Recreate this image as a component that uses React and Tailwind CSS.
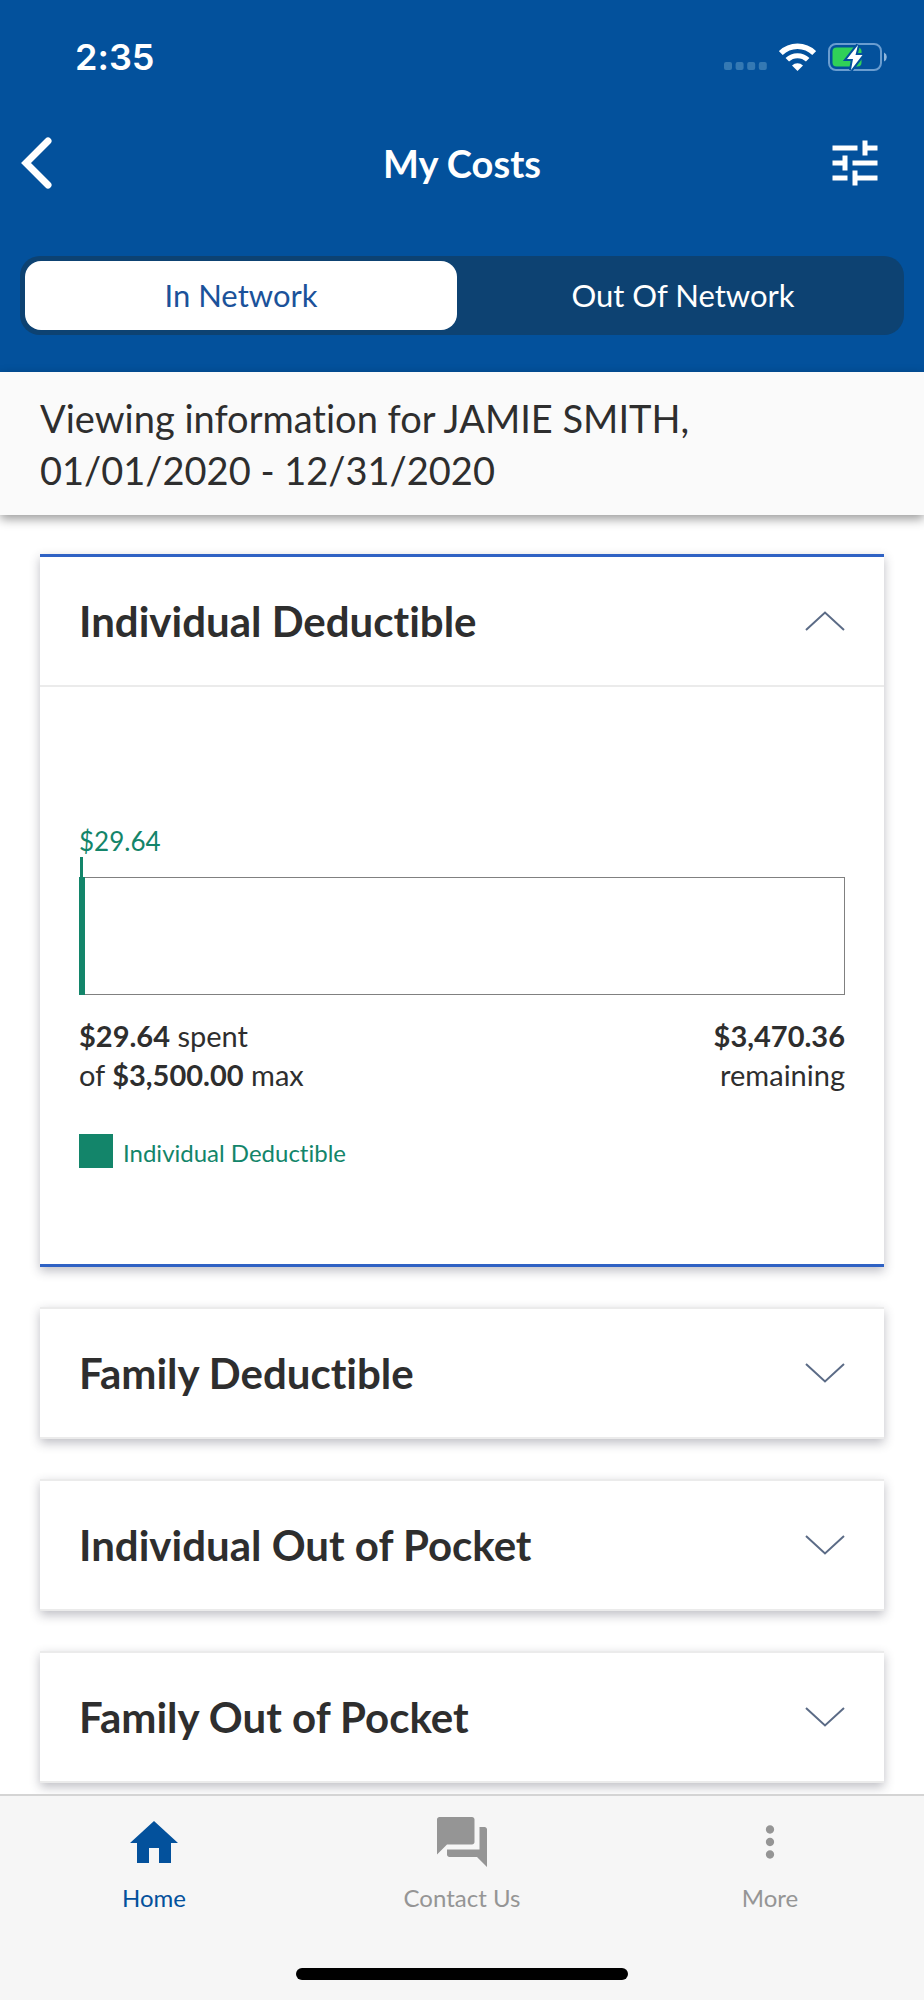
import { useState } from "react";
import { MdTune, MdForum, MdMoreVert } from "react-icons/md";

const NETWORKS = ["In Network", "Out Of Network"];

const COSTS = [
  { key: "ind-ded", title: "Individual Deductible", spent: 29.64, max: 3500 },
  { key: "fam-ded", title: "Family Deductible", spent: 29.64, max: 7000 },
  { key: "ind-oop", title: "Individual Out of Pocket", spent: 29.64, max: 6000 },
  { key: "fam-oop", title: "Family Out of Pocket", spent: 29.64, max: 12000 },
];

const TABS = [
  { key: "home", label: "Home", Icon: HomeIcon },
  { key: "contact", label: "Contact Us", Icon: ContactIcon },
  { key: "more", label: "More", Icon: MoreIcon },
];

function fmtUsd(amount) {
  return `$${amount.toLocaleString("en-US", {
    minimumFractionDigits: 2,
    maximumFractionDigits: 2,
  })}`;
}

function HomeIcon() {
  return (
    <svg viewBox="0 0 48 42" className="h-[42px] w-12" fill="currentColor">
      <path d="M24 0 48 22H41V42H29V27H19V42H7V22H0Z" />
    </svg>
  );
}

function ContactIcon() {
  return <MdForum className="size-[60px]" />;
}

function MoreIcon() {
  return <MdMoreVert className="size-[50px]" />;
}

function SignalDots() {
  return (
    <svg viewBox="0 0 43 8" className="mt-[18px] h-2 w-[43px]" fill="#3579b3">
      <rect width="8" height="8" rx="2" />
      <rect x="11.6" width="8" height="8" rx="2" />
      <rect x="23.2" width="8" height="8" rx="2" />
      <rect x="34.8" width="8" height="8" rx="2" />
    </svg>
  );
}

function WifiIcon() {
  return (
    <svg viewBox="0 0 37 28" className="h-7 w-[37px]" fill="none" stroke="white">
      <path d="M1.800 10a23.800 23.800 0 0 1 33.400 0" strokeWidth="5.500" />
      <path d="M8.300 16.800a14.600 14.600 0 0 1 20.400 0" strokeWidth="5" />
      <path d="M18.500 28 13 22.400a8 8 0 0 1 11 0Z" fill="white" stroke="none" />
    </svg>
  );
}

function BatteryIcon() {
  return (
    <svg viewBox="0 0 60 30" className="h-[30px] w-[60px]">
      <rect x="1" y="2" width="52" height="26" rx="7" fill="none" stroke="#6a9dd0" strokeWidth="2" />
      <path d="M56 10.500a5 5 0 0 1 0 9Z" fill="#8fb6dc" />
      <rect x="4.500" y="5.500" width="29" height="19" rx="4" fill="#30d158" />
      <path
        d="M30 3 19 17h6L23 28 34.500 13H27.500Z"
        fill="white"
        stroke="#03519c"
        strokeWidth="4"
        paintOrder="stroke"
      />
    </svg>
  );
}

function StatusBar() {
  return (
    <div className="flex items-center justify-between pt-9 pr-9 pl-[75px] text-white">
      <span className="font-['Inter'] text-[36px] leading-[42px] font-semibold">2:35</span>
      <div className="flex items-center gap-3">
        <SignalDots />
        <WifiIcon />
        <BatteryIcon />
      </div>
    </div>
  );
}

function Chevron({ open }) {
  return (
    <svg
      viewBox="0 0 40 20"
      className={`h-5 w-10 shrink-0 ${open ? "" : "rotate-180"}`}
      fill="none"
      stroke="#5b6b86"
      strokeWidth="2"
    >
      <path d="M1 19 20 1.500 39 19" />
    </svg>
  );
}

function CostChart({ cost }) {
  const percent = (cost.spent / cost.max) * 100;

  return (
    <div className="border-t-2 border-[#ebebeb] px-[39px] pt-[138px] pb-24">
      <p className="text-[26px] leading-8 text-[#13856a]">{fmtUsd(cost.spent)}</p>
      <div className="ml-px h-5 w-[3px] bg-[#13856a]" />
      <div className="h-[118px] border border-l-0 border-[#808080]">
        <div className="-my-px h-[118px] min-w-1.5 bg-[#13856a]" style={{ width: `${percent}%` }} />
      </div>

      <div className="mt-[21px] flex justify-between text-[29px] leading-[39px]">
        <p>
          <strong className="font-bold">{fmtUsd(cost.spent)}</strong> spent
          <br />
          of <strong className="font-bold">{fmtUsd(cost.max)}</strong> max
        </p>
        <p className="text-right">
          <strong className="font-bold">{fmtUsd(cost.max - cost.spent)}</strong>
          <br />
          remaining
        </p>
      </div>

      <div className="mt-10 flex items-center gap-[10px] text-2xl text-[#13856a]">
        <span className="size-[34px] bg-[#13856a]" />
        <span className="pt-1 leading-[30px]">{cost.title}</span>
      </div>
    </div>
  );
}

function CostCard({ cost, open, onToggle }) {
  return (
    <section
      className={`bg-white shadow-[0_4px_10px_rgba(40,40,60,0.3)] ${
        open ? "border-y-[3px] border-[#2f62c4]" : "border-y-2 border-[#ebebeb]"
      }`}
    >
      <h2>
        <button
          onClick={onToggle}
          aria-expanded={open}
          className="flex h-32 w-full items-center justify-between px-[39px] text-left text-[42px] font-bold"
        >
          {cost.title}
          <Chevron open={open} />
        </button>
      </h2>
      {open && <CostChart cost={cost} />}
    </section>
  );
}

export default function App() {
  const [network, setNetwork] = useState("In Network");
  const [openKey, setOpenKey] = useState("ind-ded");
  const [tab, setTab] = useState("home");

  return (
    <div className="flex min-h-screen flex-col bg-white font-['Lato',sans-serif] text-[#2e2e2e] [font-variant-ligatures:none]">
      <header className="bg-[#03519c] pb-[37px]">
        <StatusBar />

        <div className="mt-12 flex h-[74px] items-center justify-between pr-[39px] pl-5 text-white">
          <button aria-label="Back" className="w-[79px]">
            <svg
              viewBox="0 0 34 54"
              className="h-[54px] w-[34px]"
              fill="none"
              stroke="white"
              strokeWidth="7"
              strokeLinecap="round"
            >
              <path d="M28 5 6 27 28 49" />
            </svg>
          </button>
          <h1 className="text-[38px] font-bold">My Costs</h1>
          <button aria-label="Filter">
            <MdTune className="size-[60px]" />
          </button>
        </div>

        <div className="mx-5 mt-14 flex rounded-[20px] bg-[#0d4272]">
          {NETWORKS.map((n) => (
            <button
              key={n}
              onClick={() => setNetwork(n)}
              aria-pressed={network === n}
              className={`m-[5px] h-[69px] flex-1 rounded-2xl text-[31px] ${
                network === n ? "bg-white text-[#1b529a]" : "text-white"
              }`}
            >
              {n}
            </button>
          ))}
        </div>
      </header>

      <div className="bg-[#fafafa] px-10 pt-5 pb-[19px] text-[38px] leading-[52px] shadow-[0_4px_10px_rgba(0,0,0,0.4)]">
        <p>
          Viewing information for JAMIE SMITH,
          <br />
          01/01/2020 - 12/31/2020
        </p>
      </div>

      <main className="flex flex-col gap-10 px-10 pt-[39px] pb-[10px]">
        {COSTS.map((c) => (
          <CostCard
            key={c.key}
            cost={c}
            open={openKey === c.key}
            onToggle={() => setOpenKey(openKey === c.key ? null : c.key)}
          />
        ))}
      </main>

      <footer className="sticky bottom-0 mt-auto border-t-2 border-[#d4d4d4] bg-[#f6f6f6] pb-5">
        <nav className="flex pt-4">
          {TABS.map(({ key, label, Icon }) => (
            <button
              key={key}
              onClick={() => setTab(key)}
              className={`flex flex-1 flex-col items-center text-2xl ${
                tab === key ? "text-[#03519c]" : "text-[#959595]"
              }`}
            >
              <span className="flex h-[60px] items-center">
                <Icon />
              </span>
              <span className="mt-[10px] leading-8">{label}</span>
            </button>
          ))}
        </nav>
        <div className="mx-auto mt-[54px] h-3 w-[36%] rounded-full bg-black" />
      </footer>
    </div>
  );
}
